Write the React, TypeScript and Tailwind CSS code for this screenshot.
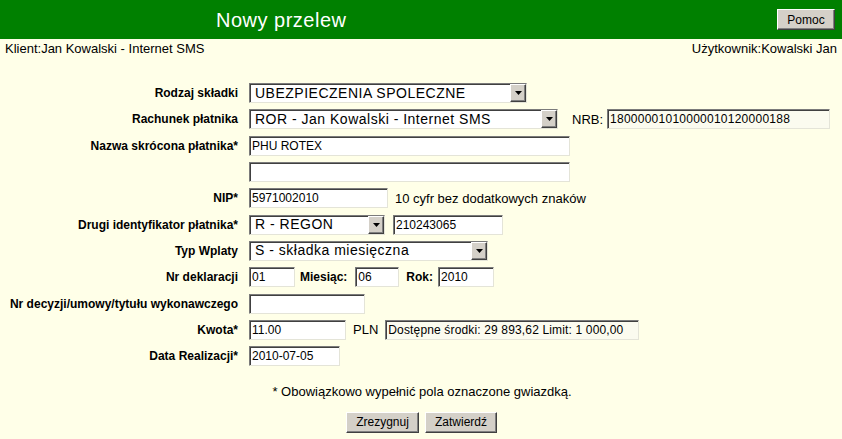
import React from 'react'

const inset =
  'border border-t-[#7b7b7b] border-l-[#7b7b7b] border-r-[#e4e4d8] border-b-[#e4e4d8] shadow-[inset_1px_1px_0_#404040]'

function TextBox({ value = '', className = '' }: { value?: string; className?: string }) {
  return (
    <input
      readOnly
      value={value}
      className={`h-[20px] px-[2px] text-[12px] text-black outline-none ${inset} ${className}`}
      style={{ fontFamily: '"Liberation Sans", Arial, sans-serif' }}
    />
  )
}

function Select({ value, className = '' }: { value: string; className?: string }) {
  return (
    <div className={`h-[20px] flex items-stretch bg-white ${inset} ${className}`}>
      <span className="flex-1 flex items-center pl-[5px] text-[14px] tracking-[0.5px] text-black whitespace-nowrap overflow-hidden">
        {value}
      </span>
      <span className="w-[16px] flex items-center justify-center bg-[#d4d0c8] border border-t-white border-l-white border-r-[#404040] border-b-[#404040] shadow-[inset_-1px_-1px_0_#808080]">
        <svg width="7" height="4" viewBox="0 0 7 4">
          <path d="M0 0h7L3.5 4z" fill="#000" />
        </svg>
      </span>
    </div>
  )
}

function Button({ children, className = '' }: { children: React.ReactNode; className?: string }) {
  return (
    <button
      className={`h-[21px] bg-[#d4d0c8] text-black text-[12px] border border-t-white border-l-white border-r-[#404040] border-b-[#404040] shadow-[inset_-1px_-1px_0_#808080] ${className}`}
    >
      {children}
    </button>
  )
}

function Row({ label, children }: { label: React.ReactNode; children?: React.ReactNode }) {
  return (
    <div className="h-[26.3px] flex items-center">
      <div className="w-[239px] pr-[1px] text-right text-[12px] font-bold text-black whitespace-nowrap">{label}</div>
      <div className="ml-[10px] flex items-center">{children}</div>
    </div>
  )
}

export default function App() {
  return (
    <div
      className="w-[842px] h-[439px] bg-[#ffffe8] text-black overflow-hidden"
      style={{ fontFamily: '"Liberation Sans", Arial, sans-serif' }}
    >
      {/* Header */}
      <div className="h-[39px] bg-[#008000] flex items-center">
        <div className="pl-[216px] text-white text-[20px] tracking-[0.5px]">Nowy przelew</div>
        <Button className="ml-auto mr-[7px] w-[58px] h-[20px]">Pomoc</Button>
      </div>

      <div className="h-[19px] flex items-center justify-between px-[5px] text-[13px]">
        <span>Klient:Jan Kowalski - Internet SMS</span>
        <span>Użytkownik:Kowalski Jan</span>
      </div>

      {/* Form */}
      <div className="mt-[22px] flex flex-col">
        <Row label="Rodzaj składki">
          <Select value="UBEZPIECZENIA SPOLECZNE" className="w-[278px]" />
        </Row>
        <Row label="Rachunek płatnika">
          <Select value="ROR - Jan Kowalski - Internet SMS" className="w-[309px]" />
          <span className="ml-[14px] text-[13px]">NRB:</span>
          <TextBox value="18000001010000010120000188" className="ml-[4px] w-[223px] bg-[#fbfbef] tracking-[0.25px]" />
        </Row>
        <Row label="Nazwa skrócona płatnika*">
          <TextBox value="PHU ROTEX" className="w-[321px] bg-white" />
        </Row>
        <Row label="">
          <TextBox className="w-[321px] bg-white" />
        </Row>
        <Row label="NIP*">
          <TextBox value="5971002010" className="w-[139px] bg-white" />
          <span className="ml-[7px] text-[13px]">10 cyfr bez dodatkowych znaków</span>
        </Row>
        <Row label="Drugi identyfikator płatnika*">
          <Select value="R - REGON" className="w-[136px]" />
          <TextBox value="210243065" className="ml-[8px] w-[110px] bg-white" />
        </Row>
        <Row label="Typ Wplaty">
          <Select value="S - składka miesięczna" className="w-[239px]" />
        </Row>
        <Row label="Nr deklaracji">
          <TextBox value="01" className="w-[46px] bg-white" />
          <span className="ml-[5px] text-[12px] font-bold">Miesiąc:</span>
          <TextBox value="06" className="ml-[8px] w-[44px] bg-white" />
          <span className="ml-[7px] text-[12px] font-bold">Rok:</span>
          <TextBox value="2010" className="ml-[5px] w-[56px] bg-white" />
        </Row>
        <Row label="Nr decyzji/umowy/tytułu wykonawczego">
          <TextBox className="w-[116px] bg-white" />
        </Row>
        <Row label="Kwota*">
          <TextBox value="11.00" className="w-[97px] bg-white" />
          <span className="ml-[7px] text-[13px]">PLN</span>
          <TextBox value="Dostępne środki: 29 893,62 Limit: 1 000,00" className="ml-[7px] w-[254px] bg-[#fbfbef] tracking-[0.15px]" />
        </Row>
        <Row label="Data Realizacji*">
          <TextBox value="2010-07-05" className="w-[91px] bg-white" />
        </Row>
      </div>

      <div className="mt-[13px] text-center text-[13px] pl-[2px]">* Obowiązkowo wypełnić pola oznaczone gwiazdką.</div>

      <div className="mt-[10px] flex justify-center gap-[6px] pl-[1px]">
        <Button className="w-[73px]">Zrezygnuj</Button>
        <Button className="w-[72px]">Zatwierdź</Button>
      </div>
    </div>
  )
}
